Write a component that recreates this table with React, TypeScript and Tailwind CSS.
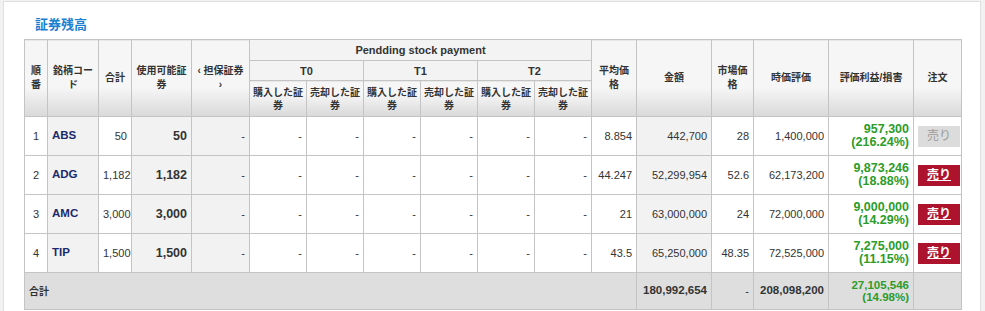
import React from "react";

type Row = {
  no: number;
  code: string;
  total: string;
  usable: string;
  avg: string;
  amount: string;
  market: string;
  value: string;
  pl: string;
  pct: string;
  disabled?: boolean;
};

const rows: Row[] = [
  { no: 1, code: "ABS", total: "50", usable: "50", avg: "8.854", amount: "442,700", market: "28", value: "1,400,000", pl: "957,300", pct: "(216.24%)", disabled: true },
  { no: 2, code: "ADG", total: "1,182", usable: "1,182", avg: "44.247", amount: "52,299,954", market: "52.6", value: "62,173,200", pl: "9,873,246", pct: "(18.88%)" },
  { no: 3, code: "AMC", total: "3,000", usable: "3,000", avg: "21", amount: "63,000,000", market: "24", value: "72,000,000", pl: "9,000,000", pct: "(14.29%)" },
  { no: 4, code: "TIP", total: "1,500", usable: "1,500", avg: "43.5", amount: "65,250,000", market: "48.35", value: "72,525,000", pl: "7,275,000", pct: "(11.15%)" },
];

const thTall =
  "border border-[#c4c4c4] px-[2px] text-[10px] font-bold leading-[14px] text-[#333] text-center align-middle bg-[linear-gradient(180deg,#f6f6f6_62%,#d9d9d9_100%)]";
const thFlat =
  "border border-[#c4c4c4] px-[2px] text-[11px] font-bold leading-[14px] text-[#333] text-center align-middle bg-[#f3f3f3]";
const thSub =
  "border border-[#c4c4c4] px-[2px] text-[10px] font-bold leading-[13px] text-[#333] text-center align-middle bg-[linear-gradient(180deg,#f6f6f6_35%,#d9d9d9_100%)]";

const cell = "border border-[#c4c4c4] px-[4px] align-middle";
const num = `${cell} text-[11px] text-[#333] text-right`;

export default function App() {
  return (
    <div className="min-h-[311px] bg-[#f2f2f2] pt-[1px] pl-[3px] pr-[4px] font-['Liberation_Sans','Noto_Sans_CJK_JP',sans-serif]">
      <div className="min-h-[310px] bg-white border-l border-t border-r border-[#e0e0e0] pl-[20px] pt-[15px]">
        <div className="h-[16px] leading-[16px] text-[13px] font-bold text-[#1a80d2] pl-[11px] mb-[6px]">
          証券残高
        </div>
        <table className="table-fixed border-collapse w-[938px]">
          <colgroup>
            <col className="w-[23px]" />
            <col className="w-[51px]" />
            <col className="w-[33px]" />
            <col className="w-[60px]" />
            <col className="w-[58px]" />
            <col className="w-[57px]" />
            <col className="w-[57px]" />
            <col className="w-[57px]" />
            <col className="w-[57px]" />
            <col className="w-[57px]" />
            <col className="w-[57px]" />
            <col className="w-[45px]" />
            <col className="w-[75px]" />
            <col className="w-[42px]" />
            <col className="w-[75px]" />
            <col className="w-[85px]" />
            <col className="w-[48px]" />
          </colgroup>
          <thead>
            <tr className="h-[21px]">
              <th rowSpan={3} className={thTall}>順<br />番</th>
              <th rowSpan={3} className={thTall}>銘柄コー<br />ド</th>
              <th rowSpan={3} className={thTall}>合計</th>
              <th rowSpan={3} className={thTall}>使用可能証<br />券</th>
              <th rowSpan={3} className={thTall}>‹ 担保証券<br />›</th>
              <th colSpan={6} className={thFlat}>Pendding stock payment</th>
              <th rowSpan={3} className={thTall}>平均価<br />格</th>
              <th rowSpan={3} className={thTall}>金額</th>
              <th rowSpan={3} className={thTall}>市場価<br />格</th>
              <th rowSpan={3} className={thTall}>時価評価</th>
              <th rowSpan={3} className={thTall}>評価利益/損害</th>
              <th rowSpan={3} className={thTall}>注文</th>
            </tr>
            <tr className="h-[20px]">
              <th colSpan={2} className={thFlat}>T0</th>
              <th colSpan={2} className={thFlat}>T1</th>
              <th colSpan={2} className={thFlat}>T2</th>
            </tr>
            <tr className="h-[36px]">
              <th className={thSub}>購入した証<br />券</th>
              <th className={thSub}>売却した証<br />券</th>
              <th className={thSub}>購入した証<br />券</th>
              <th className={thSub}>売却した証<br />券</th>
              <th className={thSub}>購入した証<br />券</th>
              <th className={thSub}>売却した証<br />券</th>
            </tr>
          </thead>
          <tbody>
            {rows.map((r) => (
              <tr key={r.no} className="h-[39px]">
                <td className={`${cell} text-[11px] text-[#333] text-center`}>{r.no}</td>
                <td className={`${cell} bg-[#f2f2f2] font-bold text-[11.5px] text-[#1a2a6c]`}>{r.code}</td>
                <td className={num}>{r.total}</td>
                <td className={`${cell} bg-[#f2f2f2] text-right font-bold text-[12.5px] text-[#333]`}>{r.usable}</td>
                <td className={`${num} bg-[#f2f2f2]`}>-</td>
                <td className={num}>-</td>
                <td className={num}>-</td>
                <td className={num}>-</td>
                <td className={num}>-</td>
                <td className={num}>-</td>
                <td className={num}>-</td>
                <td className={num}>{r.avg}</td>
                <td className={`${num} bg-[#f2f2f2]`}>{r.amount}</td>
                <td className={num}>{r.market}</td>
                <td className={num}>{r.value}</td>
                <td className={`${cell} text-right font-bold text-[12.5px] leading-[13px] text-[#2c9c2a]`}>
                  {r.pl}
                  <br />
                  {r.pct}
                </td>
                <td className={`${cell} text-center px-[0px]`}>
                  {r.disabled ? (
                    <span className="inline-block w-[42px] h-[21px] leading-[21px] bg-[#dcdcdc] text-[#9a9a9a] text-[12px] text-center align-middle">
                      売り
                    </span>
                  ) : (
                    <span className="inline-block w-[42px] h-[21px] leading-[21px] bg-[#ae132d] text-white font-bold underline text-[12px] text-center align-middle">
                      売り
                    </span>
                  )}
                </td>
              </tr>
            ))}
            <tr className="h-[37px] bg-[#dedede]">
              <td colSpan={12} className={`${cell} px-[3px] text-[10px] font-bold text-[#333]`}>合計</td>
              <td className={`${cell} text-right font-bold text-[11.5px] text-[#333]`}>180,992,654</td>
              <td className={num}>-</td>
              <td className={`${cell} text-right font-bold text-[11.5px] text-[#333]`}>208,098,200</td>
              <td className={`${cell} text-right font-bold text-[11.5px] leading-[12px] text-[#2c9c2a]`}>
                27,105,546
                <br />
                (14.98%)
              </td>
              <td className={cell}></td>
            </tr>
          </tbody>
        </table>
      </div>
    </div>
  );
}
